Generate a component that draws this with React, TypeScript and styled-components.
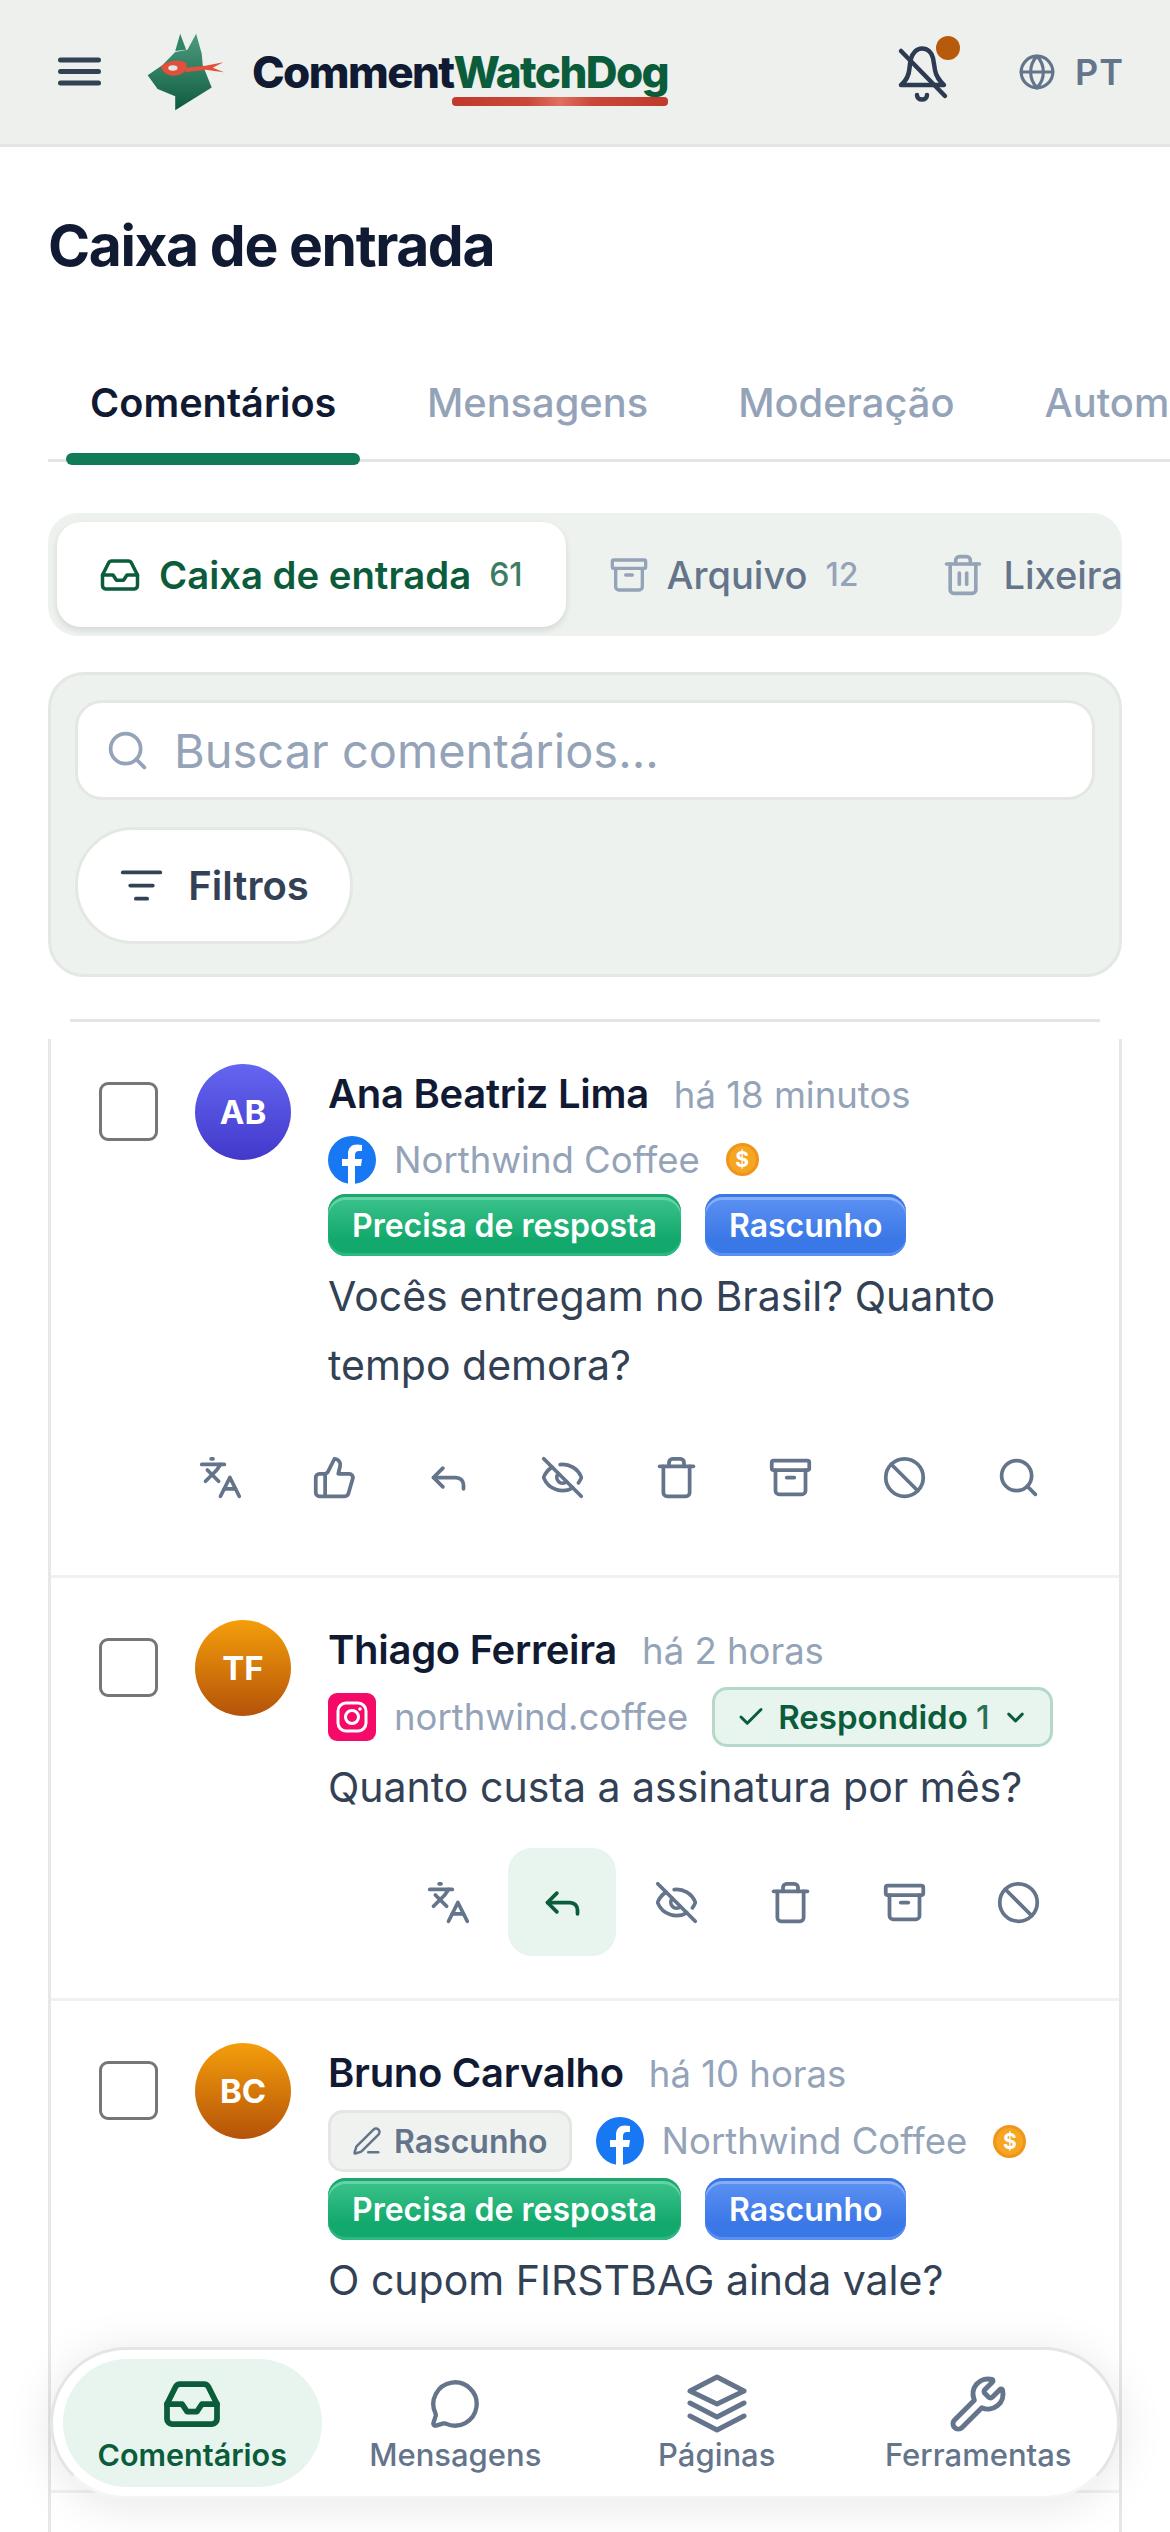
import React from 'react';
import styled, { createGlobalStyle } from 'styled-components';
import {
  Archive,
  Ban,
  Check,
  ChevronDown,
  EyeOff,
  Globe,
  Inbox,
  Languages,
  ListFilter,
  MessageCircle,
  PenLine,
  Reply,
  Search,
  ThumbsUp,
  Trash,
  Trash2,
  Wrench,
} from 'lucide-react';

const GlobalStyle = createGlobalStyle`
  html, body {
    margin: 0;
    padding: 0;
    background: #fff;
  }
  body {
    font-family: Inter, "Noto Sans", sans-serif;
    color: #111a33;
  }
  * { box-sizing: border-box; }
`;

const Page = styled.div`
  position: relative;
  width: 1170px;
  height: 2532px;
  overflow: hidden;
  background: #fff;
`;

const Header = styled.header`
  height: 147px;
  display: flex;
  align-items: center;
  padding: 0 46px 0 58px;
  background: #edf0ec;
  border-bottom: 3px solid #e4e6e3;
`;

const MenuButton = styled.div`
  display: flex;
  margin-right: 46px;
`;

const Brand = styled.div`
  display: flex;
  align-items: center;
  gap: 27px;
`;

const BrandName = styled.div`
  position: relative;
  font-size: 44px;
  font-weight: 800;
  letter-spacing: -1.6px;
  line-height: 52px;
  color: #111a33;

  span {
    color: #0b5c3b;
  }

  &::after {
    content: '';
    position: absolute;
    right: 0;
    bottom: -8px;
    width: 216px;
    height: 9px;
    border-radius: 4px;
    background: linear-gradient(90deg, #c0392b 0%, #c9483a 35%, #e07060 50%, #c9483a 65%, #c0392b 100%);
  }
`;

const HeaderRight = styled.div`
  margin-left: auto;
  display: flex;
  align-items: center;
  gap: 67px;
`;

const Bell = styled.div`
  position: relative;
  display: flex;
  margin-top: 8px;

  &::after {
    content: '';
    position: absolute;
    top: -10px;
    right: -9px;
    width: 24px;
    height: 24px;
    border-radius: 50%;
    background: #b85a0b;
  }
`;

const Lang = styled.div`
  display: flex;
  align-items: center;
  gap: 19px;
  color: #64748b;
  font-size: 36px;
  font-weight: 600;
  letter-spacing: 1px;
`;

const Main = styled.main`
  padding: 0 48px;
`;

const Title = styled.h1`
  margin: 0;
  padding-top: 63px;
  font-size: 57px;
  line-height: 72px;
  font-weight: 700;
  letter-spacing: -1.4px;
  color: #111a33;
`;

const Tabs = styled.nav`
  position: relative;
  margin: 89px -48px 0 0;
  height: 94px;
  display: flex;
  overflow: hidden;

  &::after {
    content: '';
    position: absolute;
    left: 0;
    right: 0;
    bottom: 3px;
    height: 3px;
    background: #e4e6e3;
  }
`;

const Tab = styled.div`
  flex: none;
  padding: 0 45px;
  line-height: 64px;
  font-size: 39.85px;
  font-weight: 500;
  color: #94a3b8;
`;

const ActiveTab = styled.div`
  position: relative;
  z-index: 1;
  flex: none;
  height: 94px;
  margin: 0 21.5px 0 18px;
  padding: 0 24px;
  line-height: 64px;
  font-size: 39.7px;
  font-weight: 600;
  color: #111a33;

  &::after {
    content: '';
    position: absolute;
    left: 0;
    right: 0;
    bottom: 0;
    height: 12px;
    border-radius: 6px;
    background: #117a57;
  }
`;

const Segments = styled.div`
  margin-top: 48px;
  height: 123px;
  padding: 9px;
  display: flex;
  gap: 43px;
  overflow: hidden;
  background: #eef2ee;
  border-radius: 30px;
`;

const Segment = styled.div<{ $active?: boolean }>`
  flex: none;
  height: 105px;
  display: flex;
  align-items: center;
  gap: 18px;
  padding: ${({ $active }) => ($active ? '0 43px 0 42px' : '0 40px 0 0')};
  font-size: ${({ $active }) => ($active ? '38.3px' : '38px')};
  font-weight: ${({ $active }) => ($active ? 600 : 500)};
  border-radius: 24px;
  color: ${({ $active }) => ($active ? '#0b5c3b' : '#64748b')};
  background: ${({ $active }) => ($active ? '#fff' : 'transparent')};
  box-shadow: ${({ $active }) => ($active ? '0 3px 6px rgba(15,23,42,.12)' : 'none')};

  svg {
    color: ${({ $active }) => ($active ? '#0b5c3b' : '#94a3b8')};
  }
`;

const Count = styled.span<{ $active?: boolean }>`
  font-size: 32px;
  font-weight: 500;
  opacity: ${({ $active }) => ($active ? 0.8 : 1)};
  color: ${({ $active }) => ($active ? '#0b5c3b' : '#94a3b8')};
`;

const FilterPanel = styled.section`
  margin-top: 36px;
  height: 305px;
  padding: 25px 24px 0;
  border: 3px solid #e4e8e3;
  border-radius: 36px;
  background: #eef2ee;
`;

const SearchBox = styled.div`
  height: 100px;
  display: flex;
  align-items: center;
  gap: 24px;
  padding: 0 27px;
  border: 3px solid #e4e8e3;
  border-radius: 27px;
  background: #fff;
  font-size: 47px;
  color: #94a3b8;
`;

const FilterButton = styled.div`
  margin-top: 27px;
  width: 278px;
  height: 117px;
  display: flex;
  align-items: center;
  justify-content: center;
  gap: 24px;
  border: 3px solid #e4e8e3;
  border-radius: 58px;
  background: #fff;
  font-size: 40px;
  font-weight: 600;
  color: #334155;
`;

const List = styled.section`
  position: relative;
  margin-top: 42px;
  padding: 3px 3px 0;
  height: 1600px;
  overflow: hidden;
  background: #fff;

  &::before {
    content: '';
    position: absolute;
    top: 0;
    left: 22px;
    right: 22px;
    height: 3px;
    background: #e4e6e3;
  }

  &::after {
    content: '';
    position: absolute;
    top: 20px;
    left: 0;
    right: 0;
    bottom: 0;
    border: solid #e6e7e6;
    border-width: 0 3px;
    pointer-events: none;
  }
`;

const Row = styled.article<{ $height: number }>`
  height: ${({ $height }) => $height}px;
  display: flex;
  padding-top: 42px;
  padding-left: 48px;
  border-bottom: 3px solid #f0f1f0;
`;

const Checkbox = styled.div`
  flex: none;
  width: 59px;
  height: 59px;
  margin-top: 18px;
  border: 3px solid #767676;
  border-radius: 9px;
  background: #fff;
`;

const Avatar = styled.div<{ $from: string; $to: string }>`
  flex: none;
  width: 96px;
  height: 96px;
  margin-left: 37px;
  display: flex;
  align-items: center;
  justify-content: center;
  border-radius: 50%;
  color: #fff;
  font-size: 33px;
  font-weight: 700;
  background: linear-gradient(180deg, ${({ $from }) => $from}, ${({ $to }) => $to});
`;

const Body = styled.div`
  flex: 1;
  min-width: 0;
  margin-left: 37px;
  padding-top: 2px;
`;

const NameLine = styled.div`
  display: flex;
  align-items: baseline;
  gap: 25px;
  height: 56px;
  line-height: 56px;
`;

const Name = styled.span`
  font-size: 40px;
  font-weight: 600;
  letter-spacing: -0.3px;
  color: #111a33;
`;

const Time = styled.span`
  font-size: 36.5px;
  color: #94a3b8;
`;

const SourceRow = styled.div`
  display: flex;
  align-items: center;
  flex-wrap: wrap;
  gap: 6px 24px;
  margin-top: 9px;
`;

const Network = styled.span`
  display: inline-flex;
  align-items: center;
  gap: 18px;
  height: 57px;
  font-size: 36.5px;
  color: #94a3b8;
`;

const Coin = styled.span`
  display: inline-flex;
  align-items: center;
  justify-content: center;
  width: 33px;
  height: 33px;
  margin-left: 2px;
  border-radius: 50%;
  border: 3px solid #f0941a;
  background: #f5a623;
  color: #fff;
  font-size: 21px;
  font-weight: 700;
`;

const BadgeRow = styled.div`
  display: flex;
  gap: 24px;
  margin-top: 6px;
`;

const Badge = styled.span<{ $kind: 'green' | 'blue' }>`
  height: 62px;
  display: inline-flex;
  align-items: center;
  padding: 0 24px;
  border-radius: 18px;
  color: #fff;
  font-size: 32px;
  font-weight: 600;
  background: ${({ $kind }) =>
    $kind === 'green'
      ? 'linear-gradient(180deg, #3ec48e 0%, #14a96c 72%)'
      : 'linear-gradient(180deg, #5f93f3 0%, #3b78e7 72%)'};
  box-shadow: ${({ $kind }) =>
    $kind === 'green'
      ? 'inset 0 3px 0 #1aa86f, inset 0 6px 0 #66d3a6, inset 0 -3px 0 #2cb980'
      : 'inset 0 3px 0 #3b78e7, inset 0 6px 0 #86adf6, inset 0 -3px 0 #5b8ff0'};
`;

const Chip = styled.span<{ $green?: boolean }>`
  height: ${({ $green }) => ($green ? '60px' : '62px')};
  display: inline-flex;
  align-items: center;
  gap: 12px;
  padding: 0 21px;
  border-radius: 15px;
  border: 3px solid ${({ $green }) => ($green ? '#b4d9c8' : '#e4e6e3')};
  background: ${({ $green }) => ($green ? '#e8f4ee' : '#f0f2ef')};
  color: ${({ $green }) => ($green ? '#0b5c3b' : '#64748b')};
  font-size: ${({ $green }) => ($green ? '33px' : '32px')};
  font-weight: 600;

  em {
    font-style: normal;
    font-weight: 500;
    opacity: 0.85;
  }
`;

const Message = styled.p`
  margin: 0;
  padding: 6px 40px 0 0;
  font-size: 41px;
  line-height: 69px;
  color: #334155;
`;

const Actions = styled.div<{ $compact?: boolean }>`
  display: flex;
  justify-content: flex-end;
  gap: 6px;
  margin-top: ${({ $compact }) => ($compact ? '23px' : '26px')};
  margin-left: -200px;
  padding-right: 47px;
`;

const ActionButton = styled.div<{ $active?: boolean }>`
  flex: none;
  width: 108px;
  height: 108px;
  display: flex;
  align-items: center;
  justify-content: center;
  border-radius: 24px;
  color: ${({ $active }) => ($active ? '#0b5c3b' : '#64748b')};
  background: ${({ $active }) => ($active ? '#e8f4ee' : 'transparent')};
`;

const BottomNav = styled.nav`
  position: absolute;
  left: 50px;
  bottom: 33px;
  width: 1070px;
  height: 152px;
  display: grid;
  grid-template-columns: repeat(4, 1fr);
  padding: 9px 8px 9px 10px;
  border: 3px solid #e4e6e3;
  border-bottom-color: #f4f5f4;
  border-radius: 76px;
  background: #fff;
  box-shadow: 0 6px 48px rgba(15, 23, 42, 0.1);
`;

const NavItem = styled.div<{ $active?: boolean }>`
  display: flex;
  flex-direction: column;
  align-items: center;
  justify-content: center;
  gap: 5px;
  padding-top: 3px;
  border-radius: 66px;
  font-size: ${({ $active }) => ($active ? '30.5px' : '31px')};
  font-weight: ${({ $active }) => ($active ? 600 : 500)};
  color: ${({ $active }) => ($active ? '#0b5c3b' : '#64748b')};
  background: ${({ $active }) => ($active ? '#e8f4ee' : 'transparent')};
  margin-right: ${({ $active }) => ($active ? '3px' : '0')};
`;

const NavIcon = styled.span`
  height: 54px;
  display: flex;
  align-items: center;
  justify-content: center;
`;

const MenuIcon = () => (
  <svg width="43" height="32" viewBox="0 0 43 32">
    <path d="M2.500 4H40.500M2.500 15.500H40.500M2.500 27H40.500" stroke="#334155" strokeWidth="5" strokeLinecap="round" />
  </svg>
);

const Logo = () => (
  <svg width="78" height="80" viewBox="50 65 235 240">
    <defs>
      <linearGradient id="dog" x1="0" y1="0" x2="0" y2="1">
        <stop offset="0" stopColor="#4d9b7f" />
        <stop offset="0.55" stopColor="#2c7a5e" />
        <stop offset="1" stopColor="#0e5a3d" />
      </linearGradient>
    </defs>
    <path d="M135 122 L150 70 L168 118 Z" fill="#2f8566" />
    <path
      d="M135 125 L172 118 L198 70 L215 130 L218 165 L245 232 L135 300 L135 258 L82 236 L52 195 L96 165 Z"
      fill="url(#dog)"
    />
    <path d="M165 172 L226 166 L280 156 L248 172 L282 186 L226 178 L165 186 Z" fill="#e2503c" />
    <path d="M92 168 C112 150 150 146 168 158 C174 176 160 196 130 196 C110 196 96 186 92 168 Z" fill="#e2503c" />
    <ellipse cx="128" cy="173" rx="14" ry="8" fill="#dfe9e3" />
  </svg>
);

const BellIcon = () => (
  <svg width="54" height="60" viewBox="0 0 54 60" fill="none" stroke="#2d3b52" strokeWidth="4.500" strokeLinecap="round" strokeLinejoin="round">
    <path d="M4 39 C9 35 12 30 12.500 22 L13.500 14 C15 7 20 2.500 25 2.500 C31 2.500 35 7 36 12 L38 24 C39 31 43 35 47 39 Z" />
    <path d="M20 49 C20 55 30 55 30 49" />
    <path d="M4 5 L48 50" />
  </svg>
);

const LayersIcon = () => (
  <svg width="60" height="60" viewBox="0 0 60 60" fill="none" stroke="#64748b" strokeWidth="5" strokeLinecap="round" strokeLinejoin="round">
    <path d="M3 17 L30 3 L57 17 L30 30 Z" />
    <path d="M3 29 L30 43 L57 29" />
    <path d="M3 42 L30 56 L57 42" />
  </svg>
);

const FacebookMark = () => (
  <svg width="48" height="48" viewBox="0 0 48 48">
    <circle cx="24" cy="24" r="24" fill="#1877f2" />
    <path d="M27 48V30h6l1-7h-7v-4c0-2 1-4 4-4h3V9c-2-.3-3.500-.5-5-.5-5.500 0-9 3.300-9 9.500v5h-6v7h6v18z" fill="#fff" />
  </svg>
);

const InstagramMark = () => (
  <svg width="48" height="48" viewBox="0 0 48 48">
    <rect width="48" height="48" rx="9" fill="#f50a6a" />
    <rect x="10" y="10" width="28" height="28" rx="8" fill="none" stroke="#fff" strokeWidth="3" />
    <circle cx="24" cy="24" r="6.500" fill="none" stroke="#fff" strokeWidth="3" />
    <circle cx="32" cy="16" r="1.800" fill="#fff" />
  </svg>
);

const actionIcons = [Languages, ThumbsUp, Reply, EyeOff, Trash, Archive, Ban, Search];
const replyActionIcons = [Languages, Reply, EyeOff, Trash, Archive, Ban];

const App: React.FC = () => (
  <Page>
    <GlobalStyle />
    <Header>
      <MenuButton>
        <MenuIcon />
      </MenuButton>
      <Brand>
        <Logo />
        <BrandName>
          Comment<span>WatchDog</span>
        </BrandName>
      </Brand>
      <HeaderRight>
        <Bell>
          <BellIcon />
        </Bell>
        <Lang>
          <Globe size={38} strokeWidth={2} color="#64748b" />
          PT
        </Lang>
      </HeaderRight>
    </Header>
    <Main>
      <Title>Caixa de entrada</Title>
      <Tabs>
        <ActiveTab>Comentários</ActiveTab>
        <Tab>Mensagens</Tab>
        <Tab>Moderação</Tab>
        <Tab>Automações</Tab>
      </Tabs>
      <Segments>
        <Segment $active>
          <Inbox size={42} strokeWidth={2} />
          Caixa de entrada
          <Count $active>61</Count>
        </Segment>
        <Segment>
          <Archive size={40} strokeWidth={2} />
          Arquivo
          <Count>12</Count>
        </Segment>
        <Segment>
          <Trash2 size={44} strokeWidth={2} />
          Lixeira
        </Segment>
      </Segments>
      <FilterPanel>
        <SearchBox>
          <Search size={45} strokeWidth={2} />
          Buscar comentários...
        </SearchBox>
        <FilterButton>
          <ListFilter size={45} strokeWidth={2} />
          Filtros
        </FilterButton>
      </FilterPanel>
      <List>
        <Row $height={556}>
          <Checkbox />
          <Avatar $from="#6366f1" $to="#4338ca">AB</Avatar>
          <Body>
            <NameLine>
              <Name>Ana Beatriz Lima</Name>
              <Time>há 18 minutos</Time>
            </NameLine>
            <SourceRow>
              <Network>
                <FacebookMark />
                Northwind Coffee
              </Network>
              <Coin>$</Coin>
            </SourceRow>
            <BadgeRow>
              <Badge $kind="green">Precisa de resposta</Badge>
              <Badge $kind="blue">Rascunho</Badge>
            </BadgeRow>
            <Message>Vocês entregam no Brasil? Quanto tempo demora?</Message>
            <Actions $compact>
              {actionIcons.map((Icon, i) => (
                <ActionButton key={i}>
                  <Icon size={45} strokeWidth={2} />
                </ActionButton>
              ))}
            </Actions>
          </Body>
        </Row>
        <Row $height={423}>
          <Checkbox />
          <Avatar $from="#f59e0b" $to="#b45309">TF</Avatar>
          <Body>
            <NameLine>
              <Name>Thiago Ferreira</Name>
              <Time>há 2 horas</Time>
            </NameLine>
            <SourceRow>
              <Network>
                <InstagramMark />
                northwind.coffee
              </Network>
              <Chip $green>
                <Check size={30} strokeWidth={2.4} />
                <span>
                  Respondido <em>1</em>
                </span>
                <ChevronDown size={27} strokeWidth={2.6} />
              </Chip>
            </SourceRow>
            <Message>Quanto custa a assinatura por mês?</Message>
            <Actions>
              {replyActionIcons.map((Icon, i) => (
                <ActionButton key={i} $active={i === 1}>
                  <Icon size={45} strokeWidth={2} />
                </ActionButton>
              ))}
            </Actions>
          </Body>
        </Row>
        <Row $height={492}>
          <Checkbox />
          <Avatar $from="#f59e0b" $to="#b45309">BC</Avatar>
          <Body>
            <NameLine>
              <Name>Bruno Carvalho</Name>
              <Time>há 10 horas</Time>
            </NameLine>
            <SourceRow>
              <Chip>
                <PenLine size={30} strokeWidth={2} />
                Rascunho
              </Chip>
              <Network>
                <FacebookMark />
                Northwind Coffee
              </Network>
              <Coin>$</Coin>
            </SourceRow>
            <BadgeRow>
              <Badge $kind="green">Precisa de resposta</Badge>
              <Badge $kind="blue">Rascunho</Badge>
            </BadgeRow>
            <Message>O cupom FIRSTBAG ainda vale?</Message>
          </Body>
        </Row>
      </List>
    </Main>
    <BottomNav>
      <NavItem $active>
        <NavIcon>
          <Inbox size={60} strokeWidth={2.3} />
        </NavIcon>
        Comentários
      </NavItem>
      <NavItem>
        <NavIcon>
          <MessageCircle size={52} strokeWidth={2} />
        </NavIcon>
        Mensagens
      </NavItem>
      <NavItem>
        <NavIcon>
          <LayersIcon />
        </NavIcon>
        Páginas
      </NavItem>
      <NavItem>
        <NavIcon>
          <Wrench size={60} strokeWidth={2} />
        </NavIcon>
        Ferramentas
      </NavItem>
    </BottomNav>
  </Page>
);

export default App;
